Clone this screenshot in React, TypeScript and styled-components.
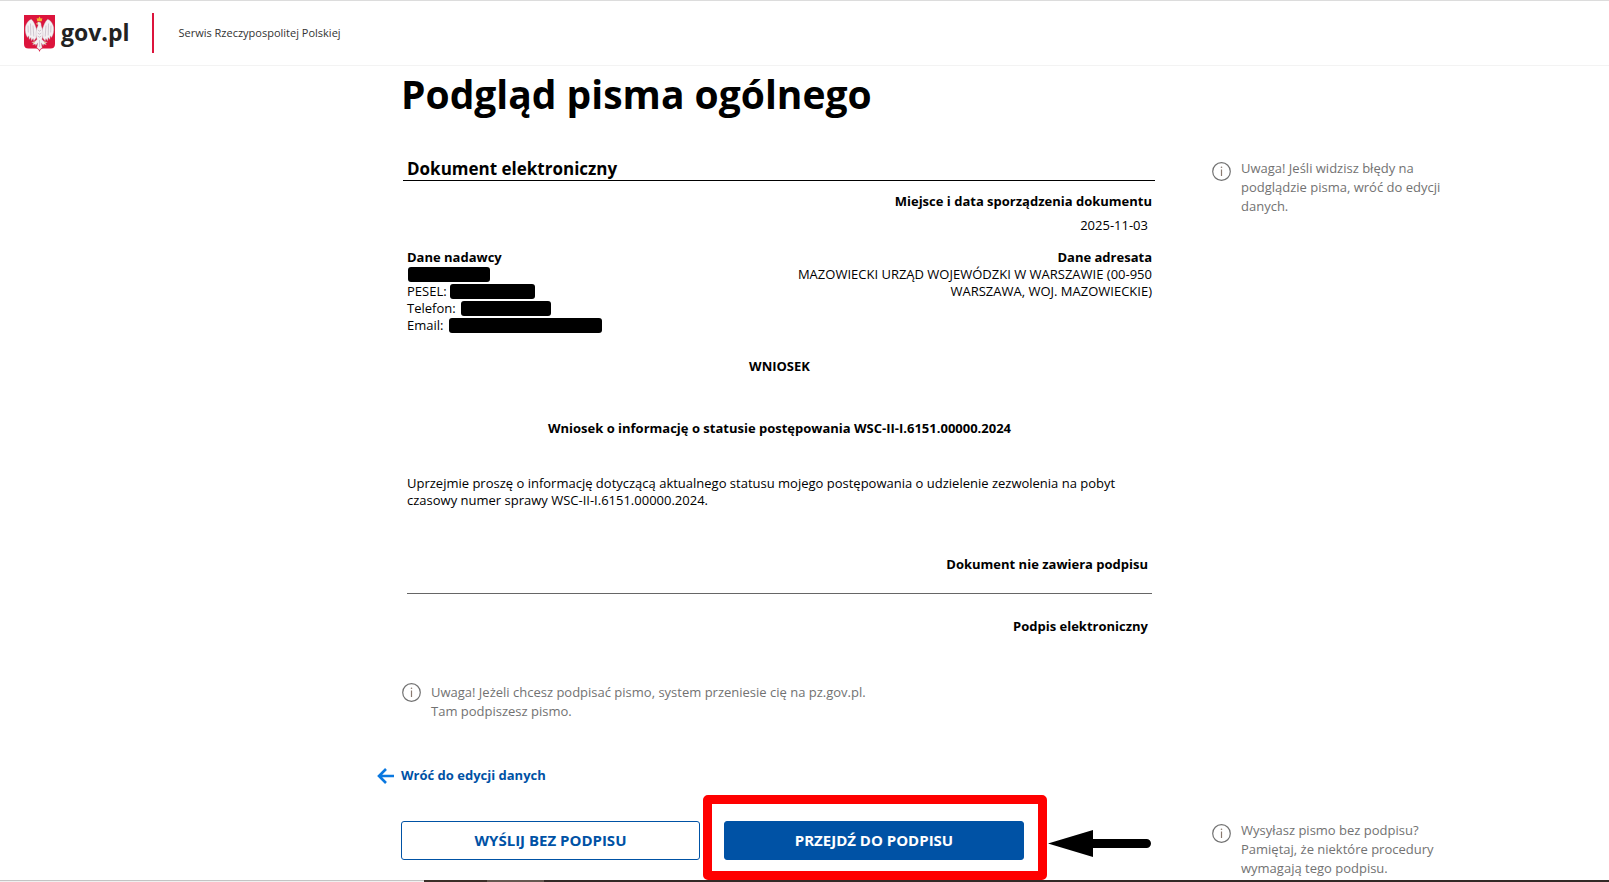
import React from "react";
import styled, { createGlobalStyle } from "styled-components";

const GlobalStyle = createGlobalStyle`
  *, *::before, *::after { box-sizing: border-box; }
  body {
    margin: 0;
    background: #fff;
    color: #000;
    font: 13px/17px "Open Sans", "Noto Sans", sans-serif;
  }
  h1, h2, h3, p { margin: 0; }
`;

const Header = styled.header`
  display: flex;
  align-items: center;
  height: 66px;
  padding-left: 24px;
  border-top: 1px solid #dcdcdc;
  border-bottom: 1px solid #f3f3f3;
`;

const Brand = styled.a`
  display: flex;
  align-items: flex-start;
  gap: 6px;
  padding-right: 23px;
  color: #222;
  font-size: 23px;
  font-weight: 700;
  line-height: 34px;
  text-decoration: none;
`;

const Tagline = styled.span`
  display: flex;
  align-items: center;
  height: 40px;
  padding: 0 0 2px 24px;
  border-left: 2px solid #dc143c;
  color: #333;
  font-size: 11px;
`;

const Page = styled.main`
  display: grid;
  grid-template-columns: 1fr minmax(0, 807px) 1fr;
`;

const Content = styled.div`
  grid-column: 2;
  max-width: 754px;
`;

const Aside = styled.aside<{ $top: number }>`
  grid-column: 3;
  max-width: 250px;
  padding: ${(p) => p.$top}px 16px 0 4px;
`;

const Title = styled.h1`
  padding-top: 1px;
  font-size: 39px;
  line-height: 54px;
`;

const Document = styled.article`
  padding: 36px 0 0 2px;
`;

const DocHeading = styled.h2`
  padding: 0 4px;
  border-bottom: 1px solid #000;
  font-size: 17px;
  line-height: 23px;
`;

const DocBody = styled.div`
  padding: 12px 3px 0 4px;
`;

const Strong = styled.h3`
  font-size: 13px;
  font-weight: 700;
`;

const Issued = styled.div`
  display: flex;
  flex-direction: column;
  gap: 7px;
  text-align: right;
`;

const Inset = styled.p<{ $bold?: boolean }>`
  padding-right: 4px;
  text-align: right;
  font-weight: ${(p) => (p.$bold ? 700 : 400)};
`;

const Parties = styled.div`
  display: flex;
  justify-content: space-between;
  padding: 15px 0 24px;
`;

const Recipient = styled.section`
  width: 372px;
  text-align: right;
`;

const Line = styled.p<{ $gap: number }>`
  display: flex;
  align-items: center;
  gap: ${(p) => p.$gap}px;
  height: 17px;
`;

const Redacted = styled.span<{ $width: number }>`
  width: ${(p) => p.$width}px;
  height: 15px;
  border-radius: 3px;
  background: #000;
`;

const Subject = styled.div`
  display: flex;
  flex-direction: column;
  gap: 45px;
  padding-bottom: 38px;
  text-align: center;
`;

const Signature = styled.section`
  padding-top: 47px;
`;

const Rule = styled.hr`
  height: 1px;
  margin: 20px 0 24px;
  border: 0;
  background: #666;
`;

const Note = styled.div<{ $iconTop: number }>`
  display: flex;
  align-items: flex-start;
  gap: 10px;
  color: #727272;
  line-height: 19px;
  svg { flex: none; margin-top: ${(p) => p.$iconTop}px; }
`;

const SignNote = styled.div`
  max-width: 480px;
  padding: 48px 0 45px 1px;
`;

const BackLink = styled.a`
  display: flex;
  align-items: center;
  gap: 7px;
  width: fit-content;
  margin-left: -24px;
  color: #0052a5;
  font-weight: 700;
  line-height: 19px;
  text-decoration: none;
`;

const Actions = styled.div`
  display: grid;
  grid-template-columns: 299px 300px;
  gap: 24px;
  padding: 36px 0 20px;
`;

const Button = styled.button<{ $primary?: boolean }>`
  width: 100%;
  height: 39px;
  padding: 0 0 1px;
  border: 1px solid #0052a5;
  border-radius: 3px;
  background: ${(p) => (p.$primary ? "#0052a5" : "#fff")};
  color: ${(p) => (p.$primary ? "#fff" : "#0052a5")};
  font: 700 15px/20px "Open Sans", "Noto Sans", sans-serif;
`;

const Marked = styled.div`
  position: relative;
`;

const Highlight = styled.span`
  position: absolute;
  inset: -26px -23px -20px -21px;
  border: 9px solid #f00;
  border-radius: 5px;
  pointer-events: none;
`;

const Pointer = styled.svg`
  position: absolute;
  left: 324px;
  top: 8px;
`;

const Strip = styled.footer`
  display: grid;
  grid-template-columns: 424px 63px 57px 1fr;
  height: 2px;
`;

const StripPart = styled.span<{ $color: string; $under?: string }>`
  border-top: 1px solid ${(p) => p.$color};
  background: ${(p) => p.$under ?? p.$color};
`;

const Emblem = () => (
  <svg width="31" height="37" viewBox="0 0 31 37" aria-hidden="true">
    <path d="M0 0h31v29q0 4.500-4.500 4.500H19q-2.500 0-3.500 3.500-1-3.500-3.500-3.500H4.500Q0 33.500 0 29z" fill="#dc143c" />
    <g fill="#f4f1f3" stroke="#b9a6b0" strokeWidth=".35">
      <path d="M13.400 16.500C11.600 12 10.700 7 7.300 4.200 4.600 5 1.900 8.500 1.300 12.500c-.4 3.600.4 7.200 2.200 10l1.200-1.700.5 3.600 1.700-2 .5 3.400 1.700-2.400.8 2.500 2.200-3z" />
      <path d="M17.600 16.500c1.800-4.500 2.700-9.500 6.100-12.300 2.700.8 5.400 4.300 6 8.300.4 3.600-.4 7.200-2.200 10l-1.200-1.700-.5 3.600-1.700-2-.5 3.400-1.700-2.400-.8 2.500-2.200-3z" />
      <path d="M14 7.500 12.200 9l1.900.5c.3 1.700-1.600 3-1.500 5.500-.9 3-.8 6.500.5 9.300L11 26.500l-3.300.8 2 .8-1 1.700 2.500-.8.600 1.600 2-2.800-.9 4.700 2.600 2.600 2.600-2.600-.9-4.700 2 2.800.6-1.600 2.500.8-1-1.700 2-.8-3.300-.8-2.100-2.200c1.300-2.800 1.400-6.300.5-9.300 0-2.500-1.500-3.700-1.300-5.800.1-2-1.900-2.800-3.600-1.700z" />
    </g>
    <g fill="none" stroke="#b7aab8" strokeWidth=".6">
      <path d="M4 10.500l.3 7M6.500 8.500l.3 12M9 10.500l.8 11M27 10.500l-.3 7M24.500 8.500l-.3 12M22 10.500l-.8 11M14 15l1.500 1.200L17 15M13.700 18l1.800 1.200 1.800-1.200M13.700 21l1.800 1.200 1.800-1.200M15.500 25v7" />
    </g>
    <path d="M13.200 6.200 12.700 3l1.500.8L15.500 1.500l1.300 2.300 1.500-.8-.5 3.200zM12.200 9l1.600-.9.200 1.100zM9 27.300l1.700-.3-.4 1.200zM22 27.300l-1.700-.3.400 1.200z" fill="#f2b632" />
  </svg>
);

const InfoIcon = () => (
  <svg width="19" height="19" viewBox="0 0 19 19" aria-hidden="true">
    <circle cx="9.500" cy="9.500" r="8.800" fill="none" stroke="#727272" strokeWidth="1.200" />
    <path d="M9.500 7.500v6.500" stroke="#8a7a70" strokeWidth="1.200" />
    <circle cx="9.500" cy="5.300" r=".8" fill="#8a7a70" />
  </svg>
);

const BackArrow = () => (
  <svg width="17" height="16" viewBox="0 0 17 16" aria-hidden="true">
    <path d="M17 8H2M9 1 2 8l7 7" fill="none" stroke="#0a78e0" strokeWidth="2.600" />
  </svg>
);

const senderLines = [
  { label: "", width: 82, gap: 1 },
  { label: "PESEL:", width: 85, gap: 3 },
  { label: "Telefon:", width: 90, gap: 5 },
  { label: "Email:", width: 153, gap: 6 },
];

export default function App() {
  return (
    <>
      <GlobalStyle />
      <Header>
        <Brand href="#">
          <Emblem />
          gov.pl
        </Brand>
        <Tagline>Serwis Rzeczypospolitej Polskiej</Tagline>
      </Header>
      <Page>
        <Content>
          <Title>Podgląd pisma ogólnego</Title>
          <Document>
            <DocHeading>Dokument elektroniczny</DocHeading>
            <DocBody>
              <Issued>
                <Strong>Miejsce i data sporządzenia dokumentu</Strong>
                <Inset>2025-11-03</Inset>
              </Issued>
              <Parties>
                <section>
                  <Strong>Dane nadawcy</Strong>
                  {senderLines.map((line) => (
                    <Line key={line.label} $gap={line.gap}>
                      <span>{line.label}</span>
                      <Redacted $width={line.width} />
                    </Line>
                  ))}
                </section>
                <Recipient>
                  <Strong>Dane adresata</Strong>
                  <p>MAZOWIECKI URZĄD WOJEWÓDZKI W WARSZAWIE (00-950 WARSZAWA, WOJ. MAZOWIECKIE)</p>
                </Recipient>
              </Parties>
              <Subject>
                <Strong>WNIOSEK</Strong>
                <Strong>Wniosek o informację o statusie postępowania WSC-II-I.6151.00000.2024</Strong>
              </Subject>
              <p>
                Uprzejmie proszę o informację dotyczącą aktualnego statusu mojego postępowania o udzielenie
                zezwolenia na pobyt czasowy numer sprawy WSC-II-I.6151.00000.2024.
              </p>
              <Signature>
                <Inset $bold>Dokument nie zawiera podpisu</Inset>
                <Rule />
                <Inset $bold>Podpis elektroniczny</Inset>
              </Signature>
            </DocBody>
          </Document>
          <SignNote>
            <Note $iconTop={0}>
              <InfoIcon />
              <p>
                Uwaga! Jeżeli chcesz podpisać pismo, system przeniesie cię na pz.gov.pl.
                <br />
                Tam podpiszesz pismo.
              </p>
            </Note>
          </SignNote>
          <BackLink href="#">
            <BackArrow />
            Wróć do edycji danych
          </BackLink>
        </Content>
        <Aside $top={93}>
          <Note $iconTop={3}>
            <InfoIcon />
            <p>Uwaga! Jeśli widzisz błędy na podglądzie pisma, wróć do edycji danych.</p>
          </Note>
        </Aside>
        <Content>
          <Actions>
            <Button type="button">WYŚLIJ BEZ PODPISU</Button>
            <Marked>
              <Button type="button" $primary>
                PRZEJDŹ DO PODPISU
              </Button>
              <Highlight />
              <Pointer width="104" height="28" viewBox="0 0 104 28" aria-hidden="true">
                <path d="M0 14.500 45 1v9h53.500a4.500 4.500 0 0 1 0 9H45v9z" />
              </Pointer>
            </Marked>
          </Actions>
        </Content>
        <Aside $top={36}>
          <Note $iconTop={3}>
            <InfoIcon />
            <p>
              Wysyłasz pismo bez podpisu?
              <br />
              Pamiętaj, że niektóre procedury wymagają tego podpisu.
            </p>
          </Note>
        </Aside>
      </Page>
      <Strip>
        <StripPart $color="#c4c4c4" $under="#f0f0f0" />
        <StripPart $color="#3b2f28" />
        <StripPart $color="#655850" />
        <StripPart $color="#332a27" />
      </Strip>
    </>
  );
}
